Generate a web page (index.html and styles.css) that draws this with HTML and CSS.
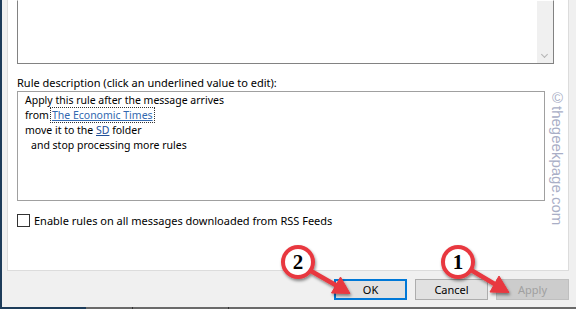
FILE: index.html
```html
<!DOCTYPE html>
<html>
	<head>
		<meta charset="UTF-8">
		<title>Rules and Alerts</title>
		<link rel="stylesheet" href="styles.css">
	</head>
	<body>
		<div class="screen">
			<div class="edge"></div>
			<div class="main">
				<div class="panel">
					<div class="listbox">
						<div class="scroll"><span class="chev"></span></div>
					</div>
					<div class="caption">Rule description (click an underlined value to edit):</div>
					<div class="desc">
						<div class="line">Apply this rule after the message arrives</div>
						<div class="line">from<span class="focus"><a class="val">The Economic Times</a></span></div>
						<div class="line">move it to the <a class="val dark">SD</a> folder</div>
						<div class="line indent">and stop processing more rules</div>
					</div>
					<label class="check"><span class="box"></span>Enable rules on all messages downloaded from RSS Feeds</label>
				</div>
				<div class="buttons">
					<button class="btn default">OK</button>
					<button class="btn">Cancel</button>
					<button class="btn off">Apply</button>
				</div>
			</div>
		</div>
		<div class="taskbar">
			<div class="tb-blue"></div>
			<div class="tb-grey"><span></span><span></span></div>
		</div>

		<div class="mark">©thegeekpage.com</div>

		<svg class="callouts" width="576" height="309" viewBox="0 0 576 309">
			<defs>
				<filter id="sh" x="-30%" y="-30%" width="160%" height="160%">
					<feDropShadow dx="1" dy="2" stdDeviation="1.6" flood-color="#000" flood-opacity="0.45"/>
				</filter>
			</defs>
			<g filter="url(#sh)" fill="#e8383f" stroke="#e8383f">
				<line x1="311" y1="271" x2="339" y2="287" stroke-width="4.5"/>
				<polygon points="350,293.5 331.5,293 340.5,277" stroke-width="1"/>
				<line x1="471" y1="270" x2="498" y2="286" stroke-width="4.5"/>
				<polygon points="509,292.5 490,292 499,276" stroke-width="1"/>
				<circle cx="298" cy="262" r="15" fill="#fff" stroke-width="4"/>
				<circle cx="458" cy="262" r="15" fill="#fff" stroke-width="4"/>
			</g>
			<text class="num" x="298" y="269">2</text>
			<text class="num" x="458" y="269">1</text>
		</svg>
	</body>
</html>
```

FILE: styles.css
```css
body {
	margin: 0;
	width: 576px;
	height: 309px;
	overflow: hidden;
	background: #f0f0f0;
	font: 11px/15px "Noto Sans", "Liberation Sans", sans-serif;
	color: #000;
	position: relative;
}
.screen {
	display: flex;
	height: 307px;
}
.edge {
	width: 2px;
	background: #1d3c5a;
}
.main {
	flex: 1;
	padding: 0 7px 0 5px;
	display: flex;
	flex-direction: column;
}
.panel {
	margin-top: -1px;
	height: 270px;
	background: #fff;
	border: 1px solid #dcdcdc;
	padding-left: 9px;
}
.listbox {
	width: 535px;
	height: 62px;
	border: 1px solid #828282;
	border-top-color: transparent;
	display: flex;
	justify-content: flex-end;
}
.scroll {
	width: 16px;
	background: #f0f0f0;
	position: relative;
}
.chev {
	position: absolute;
	left: 5px;
	top: 51px;
	width: 4px;
	height: 4px;
	border-right: 1px solid #b4b4b4;
	border-bottom: 1px solid #b4b4b4;
	transform: rotate(45deg);
}
.caption {
	margin-top: 11px;
	height: 15px;
	white-space: nowrap;
}
.desc {
	margin-top: 1px;
	width: 512px;
	height: 107px;
	border: 1px solid #a0a0a0;
	padding: 1px 7px 0;
	font-size: 10.5px;
}
.line {
	white-space: nowrap;
	height: 15px;
}
.indent {
	padding-left: 6px;
}
.focus {
	border: 1px dotted #333;
	padding: 0 1px;
	margin-left: 1px;
}
.val {
	color: #3268b0;
	text-decoration: underline;
}
.val.dark {
	color: #214f98;
}
.check {
	margin-top: 12px;
	display: flex;
	align-items: center;
	gap: 4px;
	white-space: nowrap;
}
.box {
	width: 11px;
	height: 11px;
	border: 1px solid #333;
	background: #fff;
}
.buttons {
	margin-top: 8px;
	display: flex;
	justify-content: flex-end;
	gap: 8px;
}
.btn {
	width: 73px;
	height: 21px;
	margin: 0;
	padding: 0;
	background: #e1e1e1;
	border: 1px solid #adadad;
	font: 11px "Noto Sans", "Liberation Sans", sans-serif;
	color: #000;
}
.btn.default {
	border: 2px solid #0078d7;
}
.btn.off {
	background: #cccccc;
	border-color: #bfbfbf;
	color: #a0a0a0;
}
.taskbar {
	display: flex;
	height: 2px;
}
.tb-blue {
	width: 86px;
	background: #1d3c5a;
}
.tb-grey {
	flex: 1;
	background: #6a6a6a;
	position: relative;
}
.tb-grey span {
	position: absolute;
	top: 0;
	width: 1px;
	height: 2px;
	background: #333;
}
.tb-grey span:first-child {
	left: 46px;
}
.tb-grey span:last-child {
	left: 142px;
}
.mark {
	position: absolute;
	left: 549px;
	top: 89px;
	writing-mode: vertical-rl;
	font: 15px "Liberation Sans", sans-serif;
	color: #a9aec6;
	white-space: nowrap;
}
.callouts {
	position: absolute;
	left: 0;
	top: 0;
}
.num {
	font: bold 21px "Liberation Serif", serif;
	text-anchor: middle;
	fill: #000;
}
```
